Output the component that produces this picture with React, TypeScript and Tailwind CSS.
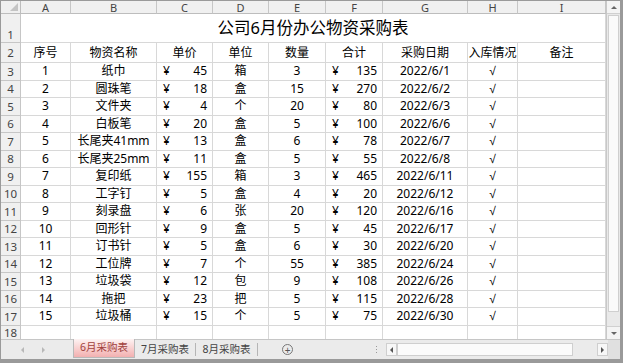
import React from "react";

const rows: [string, string, string, string, string, string, string][] = [
  ["1", "纸巾", "45", "箱", "3", "135", "2022/6/1"],
  ["2", "圆珠笔", "18", "盒", "15", "270", "2022/6/2"],
  ["3", "文件夹", "4", "个", "20", "80", "2022/6/3"],
  ["4", "白板笔", "20", "盒", "5", "100", "2022/6/6"],
  ["5", "长尾夹41mm", "13", "盒", "6", "78", "2022/6/7"],
  ["6", "长尾夹25mm", "11", "盒", "5", "55", "2022/6/8"],
  ["7", "复印纸", "155", "箱", "3", "465", "2022/6/11"],
  ["8", "工字钉", "5", "盒", "4", "20", "2022/6/12"],
  ["9", "刻录盘", "6", "张", "20", "120", "2022/6/16"],
  ["10", "回形针", "9", "盒", "5", "45", "2022/6/17"],
  ["11", "订书针", "5", "盒", "6", "30", "2022/6/20"],
  ["12", "工位牌", "7", "个", "55", "385", "2022/6/24"],
  ["13", "垃圾袋", "12", "包", "9", "108", "2022/6/26"],
  ["14", "拖把", "23", "把", "5", "115", "2022/6/28"],
  ["15", "垃圾桶", "15", "个", "5", "75", "2022/6/30"],
];

const letters = ["A", "B", "C", "D", "E", "F", "G", "H", "I"];
const headers = ["序号", "物资名称", "单价", "单位", "数量", "合计", "采购日期", "入库情况", "备注"];

const cell = "border-r border-b border-[#d8d8d8] flex items-center justify-center whitespace-nowrap overflow-hidden";
const rh = "border-r border-b border-[#c6c6c6] bg-[#f0f0f0] text-[#444] text-[11.5px] flex items-center justify-center";

function Money({ v }: { v: string }) {
  return (
    <div className="border-r border-b border-[#d8d8d8] flex items-center justify-between pl-[6px] pr-[5px] whitespace-nowrap">
      <span>¥</span>
      <span>{v}</span>
    </div>
  );
}

export default function App() {
  return (
    <div
      className="w-[623px] h-[363px] overflow-hidden bg-[#9a9a9a] pt-[1px] pl-[1px] pr-[3px] pb-[4px] text-black"
      style={{ fontFamily: '"Noto Sans", "Noto Sans CJK SC", sans-serif' }}
    >
      <div className="w-[619px] h-[358px] bg-white flex flex-col">
        <div className="flex h-[338px]">
          {/* sheet */}
          <div className="w-[605px] h-[338px] overflow-hidden">
            <div className="grid grid-cols-[20px_50px_86px_56px_56px_57px_57px_85px_50px_88px] grid-rows-[13px_29px_20px_repeat(15,17.5px)_20px] text-[12px] leading-none">
              {/* column header row */}
              <div className="border-r border-b border-[#bdbdbd] bg-[#f0f0f0] relative">
                <div className="absolute right-[2px] bottom-[2px] w-0 h-0 border-l-[8px] border-l-transparent border-b-[8px] border-b-[#c4c4c4]" />
              </div>
              {letters.map((l) => (
                <div key={l} className="border-r border-b border-[#c6c6c6] border-b-[#bdbdbd] bg-[#f0f0f0] text-[#444] text-[11px] leading-[11px] flex items-center justify-center">
                  {l}
                </div>
              ))}
              {/* row 1 */}
              <div className={`${rh} !items-end pb-[2px]`}>1</div>
              <div className="col-span-9 border-r border-b border-[#d8d8d8] flex items-center justify-center text-[16.5px] pt-[1px]">
                公司6月份办公物资采购表
              </div>
              {/* row 2 */}
              <div className={rh}>2</div>
              {headers.map((h) => (
                <div key={h} className={cell}>
                  {h}
                </div>
              ))}
              {/* data rows */}
              {rows.map((r, i) => (
                <React.Fragment key={r[0]}>
                  <div className={rh}>{i + 3}</div>
                  <div className={cell}>{r[0]}</div>
                  <div className={cell}>{r[1]}</div>
                  <Money v={r[2]} />
                  <div className={cell}>{r[3]}</div>
                  <div className={cell}>{r[4]}</div>
                  <Money v={r[5]} />
                  <div className={cell}>{r[6]}</div>
                  <div className={cell}>
                    <span className="text-[12px]" style={{ fontFamily: '"Liberation Sans", sans-serif' }}>√</span>
                  </div>
                  <div className={cell}></div>
                </React.Fragment>
              ))}
              {/* row 18 */}
              <div className={`${rh} !items-start pt-[1px]`}>18</div>
              {letters.map((l) => (
                <div key={"r18" + l} className={cell}></div>
              ))}
            </div>
          </div>
          {/* vertical scrollbar */}
          <div className="w-[14px] h-[338px] bg-[#e9e9e9] border-l border-[#c8c8c8] flex flex-col">
            <div className="h-[13px] bg-[#f4f4f4] border-b border-[#d0d0d0] flex items-center justify-center">
              <div className="w-0 h-0 border-l-[3px] border-l-transparent border-r-[3px] border-r-transparent border-b-[3px] border-b-[#666]" />
            </div>
            <div className="mt-[1px] mx-[1px] h-[297px] bg-[#fafafa] border border-[#cfcfcf]" />
            <div className="flex-1" />
            <div className="h-[13px] bg-[#f4f4f4] border-t border-[#d0d0d0] flex items-center justify-center">
              <div className="w-0 h-0 border-l-[3px] border-l-transparent border-r-[3px] border-r-transparent border-t-[3px] border-t-[#666]" />
            </div>
          </div>
        </div>
        {/* tab bar */}
        <div className="h-[20px] bg-[#ebebeb] border-t border-[#c6c6c6] flex items-stretch text-[10.5px] text-[#444]">
          <div className="w-[72px] flex items-center">
            <div className="ml-[20px] w-0 h-0 border-t-[3px] border-t-transparent border-b-[3px] border-b-transparent border-r-[3px] border-r-[#b8b8b8]" />
            <div className="ml-[18px] w-0 h-0 border-t-[3px] border-t-transparent border-b-[3px] border-b-transparent border-l-[3px] border-l-[#b8b8b8]" />
          </div>
          <div className="w-[62px] -mt-[1px] h-[19px] border-x border-b border-[#b9b9b9] bg-gradient-to-b from-[#fdf3f3] to-[#f2b0b0] text-[#a0403c] flex items-center justify-center">
            6月采购表
          </div>
          <div className="w-[61px] flex items-center justify-center border-r border-[#b5b5b5] my-[3px]">7月采购表</div>
          <div className="w-[62px] flex items-center justify-center border-r border-[#b5b5b5] my-[3px]">8月采购表</div>
          <div className="w-[59px] flex items-center justify-center">
            <div className="w-[11px] h-[11px] rounded-full border border-[#777] flex items-center justify-center text-[#555] text-[10px] leading-none">
              +
            </div>
          </div>
          <div className="w-[69px] flex items-center justify-end pr-[9px]">
            <div className="flex flex-col gap-[2px]">
              <div className="w-[1px] h-[1px] bg-[#999]" />
              <div className="w-[1px] h-[1px] bg-[#999]" />
              <div className="w-[1px] h-[1px] bg-[#999]" />
            </div>
          </div>
          {/* horizontal scrollbar */}
          <div className="w-[222px] flex items-center">
            <div className="w-[11px] h-[13px] bg-[#f7f7f7] border border-[#cfcfcf] flex items-center justify-center">
              <div className="w-0 h-0 border-t-[3px] border-t-transparent border-b-[3px] border-b-transparent border-r-[3px] border-r-[#555]" />
            </div>
            <div className="w-[176px] h-[13px] bg-[#fbfbfb] border border-[#cfcfcf]" />
            <div className="flex-1" />
            <div className="w-[11px] h-[13px] bg-[#f7f7f7] border border-[#cfcfcf] flex items-center justify-center">
              <div className="w-0 h-0 border-t-[3px] border-t-transparent border-b-[3px] border-b-transparent border-l-[3px] border-l-[#555]" />
            </div>
          </div>
          <div className="flex-1 bg-[#e0e0e0]" />
        </div>
      </div>
    </div>
  );
}
